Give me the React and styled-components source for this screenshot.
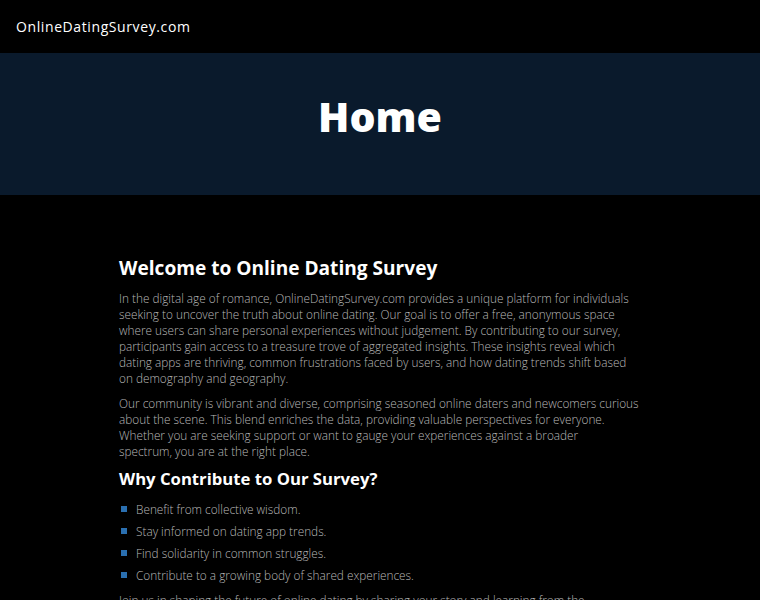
import React from "react";
import styled, { createGlobalStyle } from "styled-components";

const Global = createGlobalStyle`
  html, body { margin: 0; padding: 0; background: #000; }
  body { font-family: "Open Sans", "Liberation Sans", sans-serif; color: #fff; }
  * { box-sizing: border-box; }
`;

const Header = styled.header`
  height: 53px;
  background: #000;
  display: flex;
  align-items: center;
  padding: 0 16px;
`;

const Brand = styled.div`
  font-family: "Open Sans", sans-serif;
  font-size: 14px;
  font-weight: 400;
  letter-spacing: 0.6px;
  color: #fff;
`;

const Hero = styled.section`
  height: 142px;
  background: #0a1a2c;
  display: flex;
  align-items: center;
  justify-content: center;
  padding-bottom: 16px;
`;

const HeroTitle = styled.h1`
  margin: 0;
  font-family: "Open Sans", sans-serif;
  font-weight: 800;
  font-size: 41px;
  color: #fff;
`;

const Main = styled.main`
  width: 526px;
  margin: 0 auto;
  padding: 59px 0 0 2px;
`;

const H2 = styled.h2`
  margin: 0 0 8px;
  font-family: "Open Sans", sans-serif;
  font-weight: 700;
  font-size: 19.1px;
  line-height: 28px;
  color: #fff;
`;

const H3 = styled.h3`
  margin: 0 0 8px;
  font-family: "Open Sans", sans-serif;
  font-weight: 700;
  font-size: 16.7px;
  line-height: 22px;
  color: #fff;
`;

const P = styled.p`
  margin: 0 0 9px;
  font-family: "Open Sans", sans-serif;
  font-weight: 300;
  font-size: 11.8px;
  line-height: 16px;
  color: #b8b8b8;
  white-space: nowrap;
`;

const List = styled.ul`
  list-style: none;
  margin: 0 0 6px;
  padding: 0;
`;

const Item = styled.li`
  display: flex;
  align-items: center;
  height: 22px;
  font-family: "Open Sans", sans-serif;
  font-weight: 300;
  font-size: 11.8px;
  color: #b8b8b8;
  &::before {
    content: "";
    width: 6px;
    height: 6px;
    background: #2a6fb0;
    margin: 0 9px 0 2px;
    flex: none;
  }
`;

const Lines = ({ lines }) =>
  lines.map((l, i) => (
    <React.Fragment key={i}>
      {l}
      {i < lines.length - 1 && <br />}
    </React.Fragment>
  ));

const p1 = [
  "In the digital age of romance, OnlineDatingSurvey.com provides a unique platform for individuals",
  "seeking to uncover the truth about online dating. Our goal is to offer a free, anonymous space",
  "where users can share personal experiences without judgement. By contributing to our survey,",
  "participants gain access to a treasure trove of aggregated insights. These insights reveal which",
  "dating apps are thriving, common frustrations faced by users, and how dating trends shift based",
  "on demography and geography.",
];

const p2 = [
  "Our community is vibrant and diverse, comprising seasoned online daters and newcomers curious",
  "about the scene. This blend enriches the data, providing valuable perspectives for everyone.",
  "Whether you are seeking support or want to gauge your experiences against a broader",
  "spectrum, you are at the right place.",
];

const p3 = [
  "Join us in shaping the future of online dating by sharing your story and learning from the",
  "experiences of others in our growing community.",
];

const items = [
  "Benefit from collective wisdom.",
  "Stay informed on dating app trends.",
  "Find solidarity in common struggles.",
  "Contribute to a growing body of shared experiences.",
];

export default function App() {
  return (
    <>
      <Global />
      <Header>
        <Brand>OnlineDatingSurvey.com</Brand>
      </Header>
      <Hero>
        <HeroTitle>Home</HeroTitle>
      </Hero>
      <Main>
        <H2>Welcome to Online Dating Survey</H2>
        <P>
          <Lines lines={p1} />
        </P>
        <P>
          <Lines lines={p2} />
        </P>
        <H3>Why Contribute to Our Survey?</H3>
        <List>
          {items.map((t) => (
            <Item key={t}>{t}</Item>
          ))}
        </List>
        <P>
          <Lines lines={p3} />
        </P>
      </Main>
    </>
  );
}
